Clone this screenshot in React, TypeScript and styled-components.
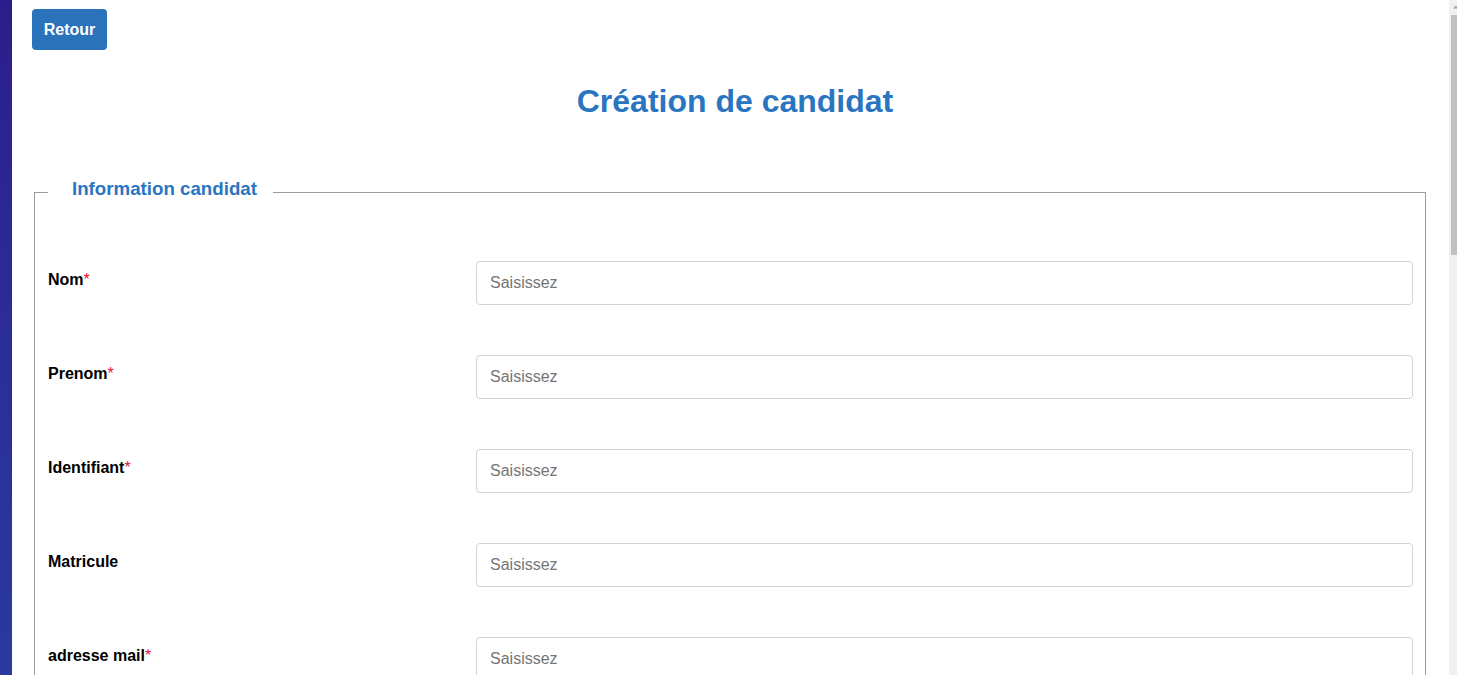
import React from "react";
import styled, { createGlobalStyle } from "styled-components";

const GlobalStyle = createGlobalStyle`
  html, body {
    margin: 0;
    padding: 0;
    height: 100%;
    overflow: hidden;
    background: #ffffff;
    font-family: "Liberation Sans", Arial, sans-serif;
  }
  #root { height: 100%; }
  * { box-sizing: border-box; }
`;

const Shell = styled.div`
  display: flex;
  height: 100vh;
  width: 100%;
`;

const Strip = styled.div`
  flex: 0 0 12px;
  background: linear-gradient(180deg, #2c1e8a 0%, #2b2d96 50%, #2a3a9f 100%);
`;

const Main = styled.main`
  flex: 1;
  min-width: 0;
  overflow: hidden;
  padding: 9px 21px 0 20px;
`;

const BackButton = styled.button`
  display: block;
  width: 75px;
  height: 41px;
  padding: 0;
  border: none;
  border-radius: 4px;
  background: #2a73ba;
  color: #ffffff;
  font-family: "Liberation Sans", Arial, sans-serif;
  font-weight: 700;
  font-size: 16px;
  cursor: pointer;
`;

const Title = styled.h1`
  margin: 33px 0 0;
  padding-left: 10px;
  text-align: center;
  font-size: 32px;
  font-weight: 700;
  line-height: normal;
  color: #2a75bf;
`;

const Fieldset = styled.fieldset`
  margin: 58px 2px 0;
  padding: 0 12px 0 13px;
  border: 1px solid #9c9c9c;
  min-width: 0;
`;

const Legend = styled.legend`
  padding: 0 16px 7px 24px;
  font-size: 18.72px;
  font-weight: 700;
  line-height: normal;
  color: #2a75bf;
`;

const Rows = styled.div`
  display: flex;
  flex-direction: column;
  gap: 50px;
  padding-top: 54px;
`;

const Row = styled.div`
  display: grid;
  grid-template-columns: 428px 1fr;
  align-items: start;
`;

const Label = styled.label`
  padding-top: 10px;
  font-size: 16px;
  font-weight: 700;
  color: #000000;
  line-height: normal;
`;

const Required = styled.span`
  color: #e8112d;
  font-weight: 400;
`;

const Input = styled.input`
  height: 44px;
  width: 100%;
  padding: 0 13px;
  border: 1px solid #cfd4da;
  border-radius: 4px;
  font-family: "Liberation Sans", Arial, sans-serif;
  font-size: 16px;
  color: #333;
  background: #fff;
  outline: none;
  &::placeholder {
    color: #757575;
  }
`;

const Rail = styled.div`
  flex: 0 0 8px;
  background: #f1f1f1;
  display: flex;
  flex-direction: column;
`;

const RailButton = styled.div`
  flex: 0 0 15px;
  display: flex;
  align-items: center;
  overflow: hidden;
`;

const Thumb = styled.div`
  flex: 0 0 240px;
  margin-left: 2px;
  background: #c1c1c1;
`;

const fields: { label: string; required: boolean }[] = [
  { label: "Nom", required: true },
  { label: "Prenom", required: true },
  { label: "Identifiant", required: true },
  { label: "Matricule", required: false },
  { label: "adresse mail", required: true },
];

export default function App() {
  return (
    <>
      <GlobalStyle />
      <Shell>
        <Strip />
        <Main>
          <BackButton type="button">Retour</BackButton>
          <Title>Création de candidat</Title>
          <Fieldset>
            <Legend>Information candidat</Legend>
            <Rows>
              {fields.map((f) => (
                <Row key={f.label}>
                  <Label>
                    {f.label}
                    {f.required && <Required>*</Required>}
                  </Label>
                  <Input placeholder="Saisissez" />
                </Row>
              ))}
            </Rows>
          </Fieldset>
        </Main>
        <Rail>
          <RailButton>
            <svg width="8" height="15" viewBox="0 0 8 15">
              <polygon points="4,8.5 7,5.5 10,8.5" fill="#a3a3a3" />
            </svg>
          </RailButton>
          <Thumb />
        </Rail>
      </Shell>
    </>
  );
}
